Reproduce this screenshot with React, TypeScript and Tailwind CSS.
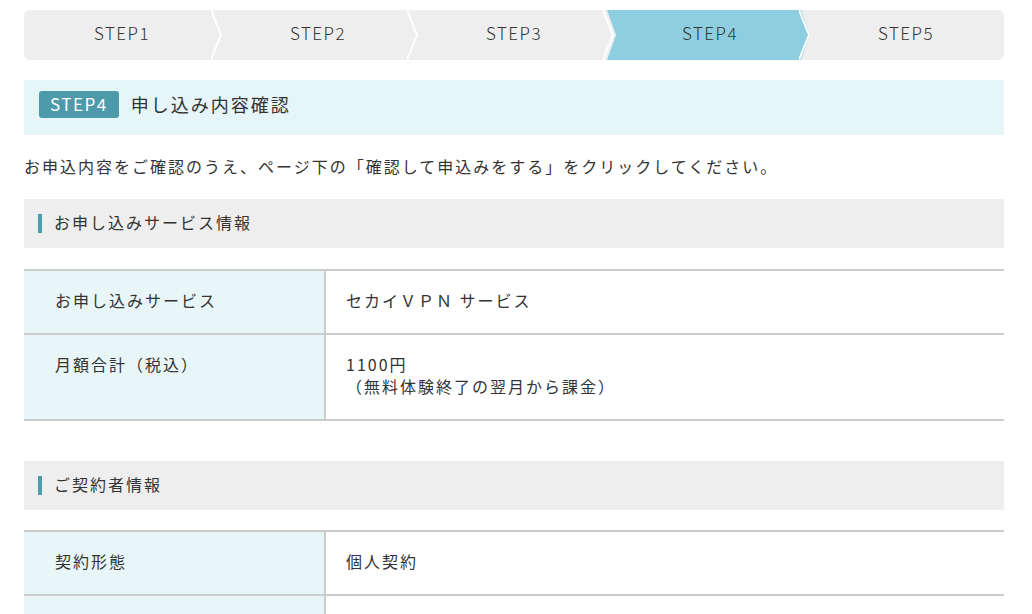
import React from 'react';

const steps = ['STEP1', 'STEP2', 'STEP3', 'STEP4', 'STEP5'];
const current = 3;

interface Row {
  label: string;
  value: React.ReactNode;
}

const serviceRows: Row[] = [
  { label: 'お申し込みサービス', value: 'セカイＶＰＮ サービス' },
  {
    label: '月額合計（税込）',
    value: (
      <>
        1100円
        <br />
        （無料体験終了の翌月から課金）
      </>
    ),
  },
];

const contractRows: Row[] = [
  { label: '契約形態', value: '個人契約' },
  { label: '', value: '' },
];

const Chevron = () => (
  <svg
    className="absolute top-0 -right-[3px] z-20 h-full w-[12px]"
    viewBox="0 0 12 50"
    preserveAspectRatio="none"
  >
    <polyline points="0,0 10,25 0,50" fill="none" stroke="#ffffff" strokeWidth="2" />
  </svg>
);

const StepBar = () => (
  <div className="flex h-[50px] overflow-hidden rounded-md bg-[#eeeeee]">
    {steps.map((s, i) => (
      <div key={s} className="relative flex flex-1 items-center justify-center pb-[4px]">
        {i === current && (
          <div className="absolute inset-y-0 -left-[5px] -right-[2px] bg-[#8dcfe0] [clip-path:polygon(0_0,calc(100%-9px)_0,100%_50%,calc(100%-9px)_100%,0_100%,9px_50%)]" />
        )}
        <span className="relative z-10 text-[17px] font-light tracking-[1.5px] text-[#333]">{s}</span>
        {i < steps.length - 1 && <Chevron />}
      </div>
    ))}
  </div>
);

const SectionHeader = ({ title }: { title: string }) => (
  <div className="flex h-[49px] items-center bg-[#eeeeee] pl-[14px]">
    <span className="mr-3 h-[19px] w-[4px] bg-[#4d9aab]" />
    <span className="pb-[4px] text-[16px] tracking-[2px] text-[#333]">{title}</span>
  </div>
);

const InfoTable = ({ rows }: { rows: Row[] }) => (
  <div className="border-t-2 border-[#cccccc]">
    {rows.map((r, i) => (
      <div key={i} className="flex border-b-2 border-[#cccccc] text-[16px] leading-[22px] tracking-[2px] text-[#333]">
        <div className="w-[302px] shrink-0 border-r-2 border-[#cccccc] bg-[#e8f6f8] pt-[18px] pb-[22px] pl-[31px]">
          {r.label}
        </div>
        <div className="flex-1 pt-[18px] pb-[22px] pl-5">{r.value}</div>
      </div>
    ))}
  </div>
);

export default function App() {
  return (
    <div
      className="h-[614px] overflow-hidden bg-white pt-[10px] pr-[28px] pl-6"
      style={{ fontFamily: '"Noto Sans CJK JP", "Noto Sans", sans-serif' }}
    >
      <StepBar />

      <div className="mt-5 flex h-[55px] items-center bg-[#e6f5f7] pb-[6px] pl-[15px]">
        <span className="rounded-[3px] bg-[#4d9aab] px-[11px] pb-[1px] text-[17px] leading-[26px] tracking-[1.5px] text-white">
          STEP4
        </span>
        <span className="ml-3 text-[18px] tracking-[2px] text-[#333]">申し込み内容確認</span>
      </div>

      <p className="mt-[19px] text-[16px] leading-[24px] tracking-[2px] text-[#333]">
        お申込内容をご確認のうえ、ページ下の「確認して申込みをする」をクリックしてください。
      </p>

      <div className="mt-[21px]">
        <SectionHeader title="お申し込みサービス情報" />
      </div>
      <div className="mt-[21px]">
        <InfoTable rows={serviceRows} />
      </div>

      <div className="mt-[40px]">
        <SectionHeader title="ご契約者情報" />
      </div>
      <div className="mt-[20px]">
        <InfoTable rows={contractRows} />
      </div>
    </div>
  );
}
